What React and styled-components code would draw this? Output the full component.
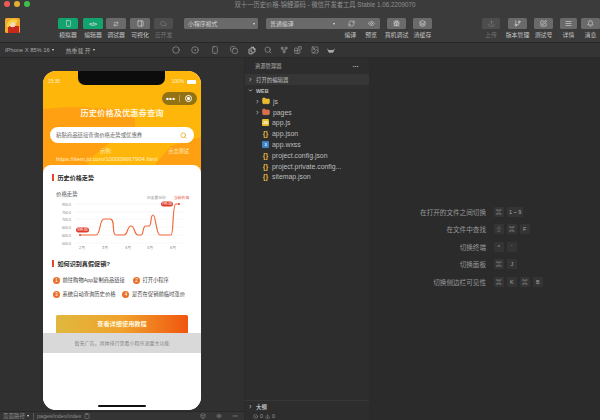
import React from 'react';
import styled, { createGlobalStyle } from 'styled-components';
import {
  Smartphone, ArrowRightLeft, PanelRight, Cloud, RefreshCw, Eye, Bug, Layers, Upload, GitBranch,
  SquarePen, AlignJustify, Bell, Circle, CircleDot, Copy, Files, Search, GitFork, Blocks, Image,
  ChevronRight, ChevronDown, FolderClosed, Clipboard, Box, MoreHorizontal, CircleX, TriangleAlert,
} from 'lucide-react';

const GlobalStyle = createGlobalStyle`
  html, body { margin: 0; padding: 0; background: #2b2b2b; }
  body { font-family: "Liberation Sans", "Noto Sans CJK SC", sans-serif; }
  * { box-sizing: border-box; }
`;

const Window = styled.div`
  width: 600px;
  height: 420px;
  display: flex;
  flex-direction: column;
  overflow: hidden;
  background: #2b2b2b;
  color: #c9c9c9;
`;

const TitleBar = styled.div`
  height: 14px;
  flex: none;
  display: flex;
  align-items: flex-start;
  position: relative;
  padding: 1px 0 0 4px;
  gap: 4px;
  background: #3b3b3b;
`;

const Light = styled.span`
  width: 6px;
  height: 6px;
  border-radius: 50%;
  background: ${(p) => p.$color};
`;

const WindowTitle = styled.div`
  position: absolute;
  left: 50px;
  right: 0;
  top: 0;
  text-align: center;
  font-size: 6.3px;
  line-height: 10px;
  color: #8f8f8f;
`;

const Toolbar = styled.div`
  height: 29px;
  flex: none;
  display: flex;
  align-items: flex-start;
  padding: 4px 0 0 5px;
  background: #3b3b3b;
  border-bottom: 1px solid #262626;
`;

const Logo = styled.svg`
  width: 15px;
  height: 15px;
  margin-right: 38px;
  flex: none;
`;

const ToolItem = styled.div`
  width: ${(p) => p.$w || 20}px;
  margin-right: ${(p) => p.$gap ?? 4}px;
  display: flex;
  flex-direction: column;
  align-items: center;
  flex: none;
  opacity: ${(p) => (p.$off ? 0.4 : 1)};
`;

const ToolButton = styled.div`
  width: 100%;
  height: 11px;
  border-radius: 1.5px;
  display: flex;
  align-items: center;
  justify-content: center;
  background: ${(p) => (p.$green ? '#12a36e' : '#6a6a6a')};
  color: #e4e4e4;
  font-size: 5.5px;
  font-weight: 700;
`;

const ToolLabel = styled.div`
  margin-top: 2px;
  font-size: 5.9px;
  line-height: 9px;
  white-space: nowrap;
  color: #c4c4c4;
`;

const SelectBox = styled.div`
  width: ${(p) => p.$w}px;
  height: 11px;
  margin-right: ${(p) => p.$gap || 0}px;
  flex: none;
  display: flex;
  align-items: center;
  padding: 0 3px 0 4px;
  background: #6a6a6a;
  border-radius: 1.5px;
  font-size: 5.9px;
  color: #d4d4d4;
  justify-content: space-between;
`;

const Caret = styled.span`
  width: 0;
  height: 0;
  border-left: 1.5px solid transparent;
  border-right: 1.5px solid transparent;
  border-top: 2px solid #e0e0e0;
  margin-left: ${(p) => p.$gap || 0}px;
  flex: none;
`;

const CompileGroup = styled.div`
  width: 114px;
  margin-right: 7px;
  flex: none;
  display: flex;
  flex-direction: column;
`;

const CompileLabels = styled.div`
  display: flex;
  justify-content: flex-end;
  gap: 9px;
  padding-right: 3px;
`;

const CompileIcons = styled.span`
  display: flex;
  gap: 13px;
  align-items: center;
  color: #d0d0d0;
  padding-right: 2.5px;
`;

const SubBar = styled.div`
  height: 15px;
  flex: none;
  display: flex;
  background: #343434;
  border-bottom: 1px solid #292929;
`;

const DeviceInfo = styled.div`
  display: flex;
  align-items: center;
  width: 172px;
  padding-left: 5px;
  font-size: 5.8px;
  color: #a8a8a8;
`;

const HotReload = styled.span`
  margin-left: 12px;
`;

const SubIcons = styled.div`
  display: flex;
  align-items: center;
`;

const SubIcon = styled.span`
  width: 8px;
  margin-right: ${(p) => p.$gap}px;
  display: flex;
  justify-content: center;
  color: ${(p) => (p.$active ? '#ededed' : '#9c9c9c')};
`;

const Main = styled.div`
  flex: 1;
  min-height: 0;
  display: flex;
`;

const Simulator = styled.div`
  width: 245px;
  flex: none;
  display: flex;
  flex-direction: column;
  background: #303030;
  border-right: 1px solid #2a2a2a;
`;

const PhoneArea = styled.div`
  flex: 1;
  min-height: 0;
  padding: 13px 0 0 43px;
`;

const Phone = styled.div`
  width: 158px;
  height: 339px;
  border-radius: 13px;
  overflow: hidden;
  position: relative;
  background: #fff;
  display: flex;
  flex-direction: column;
`;

const Notch = styled.div`
  position: absolute;
  top: 0;
  left: 35px;
  width: 87px;
  height: 14px;
  background: #0c0c0c;
  border-radius: 0 0 7px 7px;
  z-index: 2;
`;

const HeaderArea = styled.div`
  height: 103px;
  flex: none;
  position: relative;
  overflow: hidden;
  background: #ffb60a;
  color: #fff;
`;

const HeaderShape = styled.svg`
  position: absolute;
  left: 0;
  top: 0;
  width: 158px;
  height: 103px;
`;

const HeaderBody = styled.div`
  position: relative;
  display: flex;
  flex-direction: column;
`;

const StatusRow = styled.div`
  height: 21px;
  display: flex;
  justify-content: space-between;
  padding: 8px 5px 0 5px;
  font-size: 4.8px;
  line-height: 6px;
  color: #fff4d0;
`;

const StatusRight = styled.span`
  display: flex;
  align-items: flex-start;
  gap: 3px;
`;

const BatteryBar = styled.span`
  width: 9px;
  height: 3.5px;
  margin-top: 1px;
  background: #fff;
  border-radius: 1px;
`;

const CapsuleRow = styled.div`
  display: flex;
  justify-content: flex-end;
  padding-right: 4px;
`;

const Capsule = styled.div`
  width: 35px;
  height: 13px;
  border-radius: 7px;
  background: #927212;
  display: flex;
  align-items: center;
  padding: 0 5px 0 4px;
  color: #fff;
  font-size: 8px;
  font-weight: 700;
  line-height: 13px;
`;

const CapsuleDots = styled.span`
  letter-spacing: 0.3px;
  margin-top: -1px;
`;

const CapsuleDivider = styled.span`
  width: 1px;
  height: 7px;
  margin-left: auto;
  margin-right: 5px;
  background: #b9a15c;
`;

const CapsuleTarget = styled.span`
  width: 7px;
  height: 7px;
  border-radius: 50%;
  border: 1px solid #fff;
  display: flex;
  align-items: center;
  justify-content: center;

  &::after {
    content: '';
    width: 2.5px;
    height: 2.5px;
    border-radius: 50%;
    background: #fff;
  }
`;

const PageTitle = styled.div`
  margin-top: 1px;
  height: 15px;
  text-align: center;
  font-size: 8.3px;
  line-height: 15px;
  font-weight: 700;
  color: #fff3d6;
`;

const SearchBox = styled.div`
  margin: 6px 7px 0;
  height: 16px;
  border-radius: 8px;
  background: #fff;
  display: flex;
  align-items: center;
  justify-content: space-between;
  padding: 0 7px 0 6px;
  font-size: 5.4px;
  color: #6a6a6a;
`;

const ExampleRows = styled.div`
  position: relative;
  margin-top: 4px;
  padding: 0 12px 0 13px;
  font-size: 5.2px;
  line-height: 8px;
  color: #fff0c4;
`;

const ExampleTop = styled.div`
  display: flex;
  justify-content: space-between;
  padding-left: 44px;
`;

const UrlLine = styled.div`
  white-space: nowrap;
  font-size: 5.9px;
`;

const Card = styled.div`
  flex: 1;
  min-height: 0;
  margin-top: -9px;
  position: relative;
  background: #fff;
  border-radius: 8px 8px 0 0;
  display: flex;
  flex-direction: column;
  padding-top: 7px;
  color: #222;
`;

const SectionTitle = styled.div`
  display: flex;
  align-items: center;
  gap: 4px;
  height: 10px;
  padding-left: 9px;
  font-size: 6.1px;
  font-weight: 700;
  color: #2b2b2b;

  &::before {
    content: '';
    width: 1.5px;
    height: 7px;
    background: #e8452a;
  }
`;

const Chart = styled.svg`
  display: block;
  width: 158px;
  height: 71px;
  margin-top: 5px;
  flex: none;
`;

const StepGrid = styled.div`
  margin-top: 7.5px;
  display: flex;
  flex-direction: column;
  gap: 5px;
  padding-left: 10px;
`;

const StepRow = styled.div`
  display: flex;
  height: 9px;
  align-items: center;
  gap: ${(p) => p.$gap}px;
`;

const Step = styled.div`
  display: flex;
  align-items: center;
  gap: 2.5px;
  font-size: 5.3px;
  color: #444;
  white-space: nowrap;
`;

const StepDot = styled.span`
  width: 7px;
  height: 7px;
  border-radius: 50%;
  background: #e8702a;
  color: #fff;
  font-size: 4.5px;
  line-height: 7px;
  text-align: center;
`;

const GuideButton = styled.div`
  margin: 16.5px 13px 0;
  height: 18px;
  flex: none;
  border-radius: 1.5px 1.5px 0 0;
  background: linear-gradient(90deg, #e0b83e 0%, #f0a22c 50%, #f0560f 100%);
  color: #fff5dc;
  font-size: 6.2px;
  font-weight: 700;
  line-height: 18px;
  text-align: center;
`;

const AdBand = styled.div`
  height: 20px;
  flex: none;
  background: #d9d9d9;
  color: #858585;
  font-size: 5px;
  line-height: 20px;
  text-align: center;
`;

const HomeBar = styled.div`
  position: absolute;
  left: 55px;
  bottom: 3px;
  width: 48px;
  height: 2px;
  border-radius: 1px;
  background: #111;
`;

const PathBar = styled.div`
  height: 9px;
  flex: none;
  display: flex;
  align-items: center;
  padding: 0 6px 0 3px;
  font-size: 5.5px;
  color: #8e8e8e;
  background: #343434;
  border-top: 1px solid #282828;
`;

const PathDivider = styled.span`
  width: 1px;
  height: 7px;
  margin: 0 3px 0 4px;
  background: #555;
`;

const PathIcons = styled.span`
  margin-left: auto;
  display: flex;
  gap: 10px;
  align-items: center;
`;

const CopyMark = styled(Clipboard)`
  margin-left: 3px;
`;

const Explorer = styled.div`
  width: 125px;
  flex: none;
  display: flex;
  flex-direction: column;
  background: #2d2d2d;
  border-right: 1px solid #2a2a2a;
`;

const ExplorerHead = styled.div`
  height: 16px;
  flex: none;
  display: flex;
  align-items: center;
  justify-content: space-between;
  padding: 0 10px 0 10px;
  font-size: 5.3px;
  color: #b0b0b0;
`;

const PanelRow = styled.div`
  height: 11px;
  flex: none;
  display: flex;
  align-items: center;
  gap: 3px;
  padding-left: 3px;
  font-size: 5.4px;
  color: #c0c0c0;
  background: ${(p) => (p.$dim ? '#363636' : 'transparent')};
  ${(p) => p.$bold && 'font-weight: 700;'}
`;

const FileList = styled.div`
  flex: 1;
  min-height: 0;
  display: flex;
  flex-direction: column;
`;

const FileRow = styled.div`
  height: 10.8px;
  flex: none;
  display: flex;
  align-items: center;
  padding-left: ${(p) => (p.$folder ? 10 : 17)}px;
  gap: ${(p) => (p.$folder ? 1.5 : 3)}px;
  font-family: "Liberation Sans", sans-serif;
  font-size: 6.9px;
  color: #bdbdbd;
  white-space: nowrap;
`;

const FileBadge = styled.span`
  width: 7px;
  height: 7px;
  flex: none;
  display: flex;
  align-items: center;
  justify-content: center;
  font-size: ${(p) => (p.$kind === 'json' ? 7 : 4)}px;
  font-weight: 700;
  line-height: 7px;
  border-radius: 1px;
  color: ${(p) => (p.$kind === 'json' ? '#e8b93c' : '#fff')};
  background: ${(p) => (p.$kind === 'js' ? '#e8bd2c' : p.$kind === 'wxss' ? '#3b82c4' : 'transparent')};
`;

const Outline = styled.div`
  height: 20px;
  flex: none;
  display: flex;
  flex-direction: column;
`;

const OutlineHead = styled.div`
  height: 12px;
  display: flex;
  align-items: center;
  gap: 3px;
  padding-left: 3px;
  font-size: 5.4px;
  font-weight: 700;
  color: #bdbdbd;
  border-top: 1px solid #383838;
`;

const ProblemRow = styled.div`
  height: 8px;
  display: flex;
  align-items: center;
  gap: 2px;
  padding-left: 8px;
  font-size: 5.5px;
  color: #999;
`;

const EditorPane = styled.div`
  flex: 1;
  min-width: 0;
  padding-top: 148.5px;
  display: flex;
  flex-direction: column;
  gap: 7.5px;
  background: #2b2b2b;
`;

const HintRow = styled.div`
  height: 10px;
  display: flex;
  align-items: center;
`;

const HintLabel = styled.div`
  width: 116px;
  text-align: right;
  font-size: 6.6px;
  color: #999;
  white-space: nowrap;
`;

const HintKeys = styled.div`
  margin-left: 8px;
  display: flex;
  gap: 3.5px;
`;

const Key = styled.span`
  min-width: 9.5px;
  height: 10px;
  padding: 0 2px;
  border-radius: 1px;
  background: #343434;
  color: #a8a8a8;
  font-size: 5.5px;
  line-height: 10px;
  text-align: center;
`;

const linePath = 'M80 48 L96 48 C101 48 99 32 104 32 L110 32 C116 32 111 48 116 48 L124 48 C128 48 127 39 131 39 C135 39 134 48 138 48 L141 48 C144 48 142 39 146 39 L149 39 C152 39 150 28 153 28 C156 28 156 48 160 48 L171 48 C174 48 172 17 176 17 L179 17';

const chartYLabels = [
  ['900.0', 17],
  ['750.0', 25],
  ['700.0', 32],
  ['650.0', 40],
  ['600.0', 48],
  ['550.0', 56],
];

const chartXLabels = [
  ['2月', 82],
  ['3月', 105],
  ['4月', 128],
  ['5月', 150],
  ['6月', 173],
];

const PriceChart = () => (
  <Chart viewBox="43 0 158 71" fontFamily="Noto Sans CJK SC, sans-serif">
    <text x="56" y="9" fontSize="5.4" fill="#555">价格走势</text>
    <text x="147" y="11.5" fontSize="3.8" fill="#999">历史最低价</text>
    <text x="174" y="11.5" fontSize="3.8" fill="#e8452a">当前价格</text>
    {chartYLabels.map(([label, y]) => (
      <g key={label}>
        <text x="62" y={y + 1.5} fontSize="3.6" fill="#888">{label}</text>
        <line x1="75" x2="185" y1={y} y2={y} stroke="#f2f2f2" strokeWidth="0.6" />
      </g>
    ))}
    {chartXLabels.map(([label, x]) => (
      <text key={label} x={x} y="62" fontSize="3.8" fill="#888" textAnchor="middle">{label}</text>
    ))}
    <path d={linePath} fill="none" stroke="#ef6a3c" strokeWidth="1.2" />
    <circle cx="80" cy="48" r="0.9" fill="#d9362b" />
    <circle cx="179" cy="17" r="0.9" fill="#d9362b" />
    <rect x="76" y="40.5" width="13" height="5" rx="2.5" fill="#e03a2c" />
    <text x="82.5" y="44.2" fontSize="3.4" fill="#fff" textAnchor="middle">599.00</text>
    <rect x="161" y="14.5" width="12" height="5" rx="2.5" fill="#e03a2c" />
    <text x="167" y="18.2" fontSize="3.4" fill="#fff" textAnchor="middle">799.00</text>
  </Chart>
);

const tools = [
  { label: '模拟器', green: true, icon: <Smartphone size={7} />, gap: 5 },
  { label: '编辑器', green: true, text: '</>', gap: 3 },
  { label: '调试器', icon: <ArrowRightLeft size={6} />, gap: 4 },
  { label: '可视化', icon: <PanelRight size={7} />, gap: 4 },
  { label: '云开发', icon: <Cloud size={7} />, gap: 11, off: true, w: 19 },
];

const rightTools = [
  { label: '上传', icon: <Upload size={7} />, gap: 8, off: true, w: 18 },
  { label: '版本管理', icon: <GitBranch size={7} />, gap: 7, w: 19 },
  { label: '测试号', icon: <SquarePen size={7} />, gap: 7, w: 19 },
  { label: '详情', icon: <AlignJustify size={7} />, gap: 4, w: 17 },
  { label: '消息', icon: <Bell size={7} />, gap: 0, w: 19 },
];

const subIcons = [
  { icon: <Circle size={8} />, gap: 11 },
  { icon: <CircleDot size={8} />, gap: 12 },
  { icon: <Smartphone size={8} />, gap: 11 },
  { icon: <Copy size={8} />, gap: 10 },
  { icon: <Files size={9} />, gap: 8, active: true },
  { icon: <Search size={8} />, gap: 8 },
  { icon: <GitFork size={8} />, gap: 6 },
  { icon: <Blocks size={8} />, gap: 9 },
  { icon: <Image size={8} />, gap: 8 },
  {
    icon: (
      <svg width="9" height="6" viewBox="0 0 9 6">
        <path d="M0 1 L2 3 H7 L9 1 L7.5 5 Q7 6 6 6 H3 Q2 6 1.5 5 Z" fill="#a8a8a8" />
      </svg>
    ),
    gap: 0,
  },
];

const files = [
  { name: 'app.js', kind: 'js', mark: 'JS' },
  { name: 'app.json', kind: 'json', mark: '{}' },
  { name: 'app.wxss', kind: 'wxss', mark: '3' },
  { name: 'project.config.json', kind: 'json', mark: '{}' },
  { name: 'project.private.config...', kind: 'json', mark: '{}' },
  { name: 'sitemap.json', kind: 'json', mark: '{}' },
];

const hints = [
  { label: '在打开的文件之间切换', keys: ['⌘', '1 ~ 9'] },
  { label: '在文件中查找', keys: ['⇧', '⌘', 'F'] },
  { label: '切换终端', keys: ['^', '`'] },
  { label: '切换面板', keys: ['⌘', 'J'] },
  { label: '切换侧边栏可见性', keys: ['⌘', 'K', '⌘', 'B'] },
];

const Tool = ({ item }) => (
  <ToolItem $gap={item.gap} $off={item.off} $w={item.w}>
    <ToolButton $green={item.green}>{item.icon || item.text}</ToolButton>
    <ToolLabel>{item.label}</ToolLabel>
  </ToolItem>
);

const App = () => (
  <Window>
    <GlobalStyle />
    <TitleBar>
      <Light $color="#ee5a55" />
      <Light $color="#e9b02f" />
      <Light $color="#3fbf49" />
      <WindowTitle>双十一历史价格-锦鲤源码 - 微信开发者工具 Stable 1.06.2209070</WindowTitle>
    </TitleBar>

    <Toolbar>
      <Logo viewBox="0 0 15 15">
        <rect width="15" height="15" rx="1.5" fill="#f0a92a" />
        <rect x="3" y="8" width="11" height="7" fill="#c8281e" />
        <circle cx="7.5" cy="6" r="3.2" fill="#f7d9b5" />
        <path d="M2 9 C1 2 9 -1 13 3 L11 5 C8 3 5 4 4 9 Z" fill="#f6d33c" />
      </Logo>
      {tools.map((t) => <Tool key={t.label} item={t} />)}
      <SelectBox $w={74} $gap={8}>
        <span>小程序模式</span>
        <Caret />
      </SelectBox>
      <CompileGroup>
        <SelectBox $w={114}>
          <span>普通编译</span>
          <CompileIcons>
            <Caret />
            <RefreshCw size={7} />
            <Eye size={7} />
          </CompileIcons>
        </SelectBox>
        <CompileLabels>
          <ToolLabel>编译</ToolLabel>
          <ToolLabel>预览</ToolLabel>
        </CompileLabels>
      </CompileGroup>
      <Tool item={{ label: '真机调试', icon: <Bug size={7} />, gap: 7, w: 19 }} />
      <Tool item={{ label: '清缓存', icon: <Layers size={7} />, gap: 50, w: 19 }} />
      {rightTools.map((t) => <Tool key={t.label} item={t} />)}
    </Toolbar>

    <SubBar>
      <DeviceInfo>
        iPhone X 85% 16
        <Caret $gap={2} />
        <HotReload>热重载 开</HotReload>
        <Caret $gap={2} />
      </DeviceInfo>
      <SubIcons>
        {subIcons.map((s, i) => (
          <SubIcon key={i} $gap={s.gap} $active={s.active}>{s.icon}</SubIcon>
        ))}
      </SubIcons>
    </SubBar>

    <Main>
      <Simulator>
        <PhoneArea>
          <Phone>
            <Notch />
            <HeaderArea>
              <HeaderShape viewBox="0 0 158 103">
                <path d="M0 38 L25 36 L77 38 L92 48 L92 60 L66 72 L47 88 L40 103 L0 103 Z" fill="#ff9f12" />
                <path d="M158 66 L128 75 L113 92 L113 103 L158 103 Z" fill="#ff9f12" />
              </HeaderShape>
              <HeaderBody>
                <StatusRow>
                  <span>15:35</span>
                  <StatusRight>100% <BatteryBar /></StatusRight>
                </StatusRow>
                <CapsuleRow>
                  <Capsule>
                    <CapsuleDots>•••</CapsuleDots>
                    <CapsuleDivider />
                    <CapsuleTarget />
                  </Capsule>
                </CapsuleRow>
                <PageTitle>历史价格及优惠券查询</PageTitle>
                <SearchBox>
                  粘贴商品链接查询价格走势或优惠券
                  <Search size={7} color="#e8b43a" strokeWidth={3} />
                </SearchBox>
                <ExampleRows>
                  <ExampleTop>
                    <span>示例:</span>
                    <span>点击测试</span>
                  </ExampleTop>
                  <UrlLine>https://item.jd.com/100009667904.html</UrlLine>
                </ExampleRows>
              </HeaderBody>
            </HeaderArea>
            <Card>
              <SectionTitle>历史价格走势</SectionTitle>
              <PriceChart />
              <SectionTitle>如何识别真假促销?</SectionTitle>
              <StepGrid>
                <StepRow $gap={8}>
                  <Step><StepDot>1</StepDot>前往购物App复制商品链接</Step>
                  <Step><StepDot>2</StepDot>打开小程序</Step>
                </StepRow>
                <StepRow $gap={7}>
                  <Step><StepDot>3</StepDot>系统自动查询历史价格</Step>
                  <Step><StepDot>4</StepDot>是否在促销前临时涨价</Step>
                </StepRow>
              </StepGrid>
              <GuideButton>查看详细使用教程</GuideButton>
              <AdBand>暂无广告，具体排行需看小程序流量主功能</AdBand>
            </Card>
            <HomeBar />
          </Phone>
        </PhoneArea>
        <PathBar>
          页面路径 <Caret $gap={2} />
          <PathDivider />
          pages/index/index
          <CopyMark size={6} />
          <PathIcons>
            <Box size={6} />
            <Eye size={6} />
            <MoreHorizontal size={6} />
          </PathIcons>
        </PathBar>
      </Simulator>

      <Explorer>
        <ExplorerHead>
          <span>资源管理器</span>
          <MoreHorizontal size={7} />
        </ExplorerHead>
        <PanelRow $dim>
          <ChevronRight size={5} strokeWidth={4} />打开的编辑器
        </PanelRow>
        <PanelRow $bold>
          <ChevronDown size={5} strokeWidth={4} />WEB
        </PanelRow>
        <FileList>
          <FileRow $folder>
            <ChevronRight size={5} strokeWidth={4} />
            <FolderClosed size={8} fill="#e8bb34" color="#e8bb34" />&nbsp;js
          </FileRow>
          <FileRow $folder>
            <ChevronRight size={5} strokeWidth={4} />
            <FolderClosed size={8} fill="#d9714f" color="#d9714f" />&nbsp;pages
          </FileRow>
          {files.map((f) => (
            <FileRow key={f.name}>
              <FileBadge $kind={f.kind}>{f.mark}</FileBadge>
              {f.name}
            </FileRow>
          ))}
        </FileList>
        <Outline>
          <OutlineHead><ChevronRight size={5} strokeWidth={4} />大纲</OutlineHead>
          <ProblemRow>
            <CircleX size={5} /> 0 <TriangleAlert size={5} /> 0
          </ProblemRow>
        </Outline>
      </Explorer>

      <EditorPane>
        {hints.map((h) => (
          <HintRow key={h.label}>
            <HintLabel>{h.label}</HintLabel>
            <HintKeys>
              {h.keys.map((k, i) => <Key key={i}>{k}</Key>)}
            </HintKeys>
          </HintRow>
        ))}
      </EditorPane>
    </Main>
  </Window>
);

export default App;
